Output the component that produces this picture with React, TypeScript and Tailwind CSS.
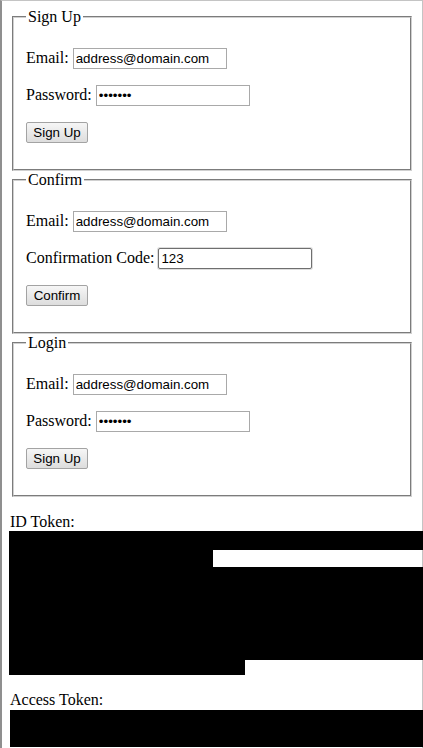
import React from 'react';

const serif = "font-['Liberation_Serif','Times_New_Roman',serif]";
const inputBase =
  "inline-block align-baseline w-[154px] h-[21px] border bg-white px-[2px] py-0 text-[13.333px] text-black font-['Liberation_Sans',Arial,sans-serif] outline-none";
const buttonCls =
  "inline-block align-baseline w-[62px] h-[21px] rounded-[2px] border border-[#a3a3a3] bg-gradient-to-b from-[#f6f6f6] to-[#dddddd] text-[13.333px] text-black font-['Liberation_Sans',Arial,sans-serif] leading-none";

type Field = { label: string; type: string; value: string; focused?: boolean };

const Box: React.FC<{ title: string; fields: Field[]; action: string }> = ({ title, fields, action }) => (
  <fieldset className="mx-[2px] border-2 [border-style:groove] border-[#d0d0d0] px-3 pt-[5.6px] pb-[10px]">
    <legend className="px-[2px]">{title}</legend>
    {fields.map((f) => (
      <p key={f.label} className="my-4">
        {f.label}:{' '}
        <input
          type={f.type}
          defaultValue={f.value}
          autoFocus={f.focused}
          className={
            f.focused
              ? inputBase + ' border-[#6f6f6f] rounded-[2px] shadow-[0_0_0_1px_rgba(120,120,120,0.25)] caret-black'
              : inputBase + ' border-[#a9a9a9]'
          }
        />
      </p>
    ))}
    <p className="my-4">
      <button className={buttonCls}>{action}</button>
    </p>
  </fieldset>
);

export default function App() {
  return (
    <div
      className={`${serif} min-h-screen w-full border-l-2 border-t border-r border-l-[#8f8f8f] border-t-[#c4c4c4] border-r-[#c4c4c4] px-2 pt-[7px] text-[16px] leading-[1.15] text-black bg-white`}
    >
      <Box
        title="Sign Up"
        fields={[
          { label: 'Email', type: 'text', value: 'address@domain.com' },
          { label: 'Password', type: 'password', value: 'passwrd' },
        ]}
        action="Sign Up"
      />
      <Box
        title="Confirm"
        fields={[
          { label: 'Email', type: 'text', value: 'address@domain.com' },
          { label: 'Confirmation Code', type: 'text', value: '123', focused: true },
        ]}
        action="Confirm"
      />
      <Box
        title="Login"
        fields={[
          { label: 'Email', type: 'text', value: 'address@domain.com' },
          { label: 'Password', type: 'password', value: 'passwrd' },
        ]}
        action="Sign Up"
      />

      <p className="mt-4">ID Token:</p>
      <div className="-ml-px -mr-[9px]">
        <div className="h-[19px] bg-black" />
        <div className="h-[17px] w-[204px] bg-black" />
        <div className="h-[93px] bg-black" />
        <div className="h-[15px] w-[236px] bg-black" />
      </div>

      <p className="mt-4">Access Token:</p>
      <div className="-mr-[9px] h-[37px] bg-black" />
    </div>
  );
}
